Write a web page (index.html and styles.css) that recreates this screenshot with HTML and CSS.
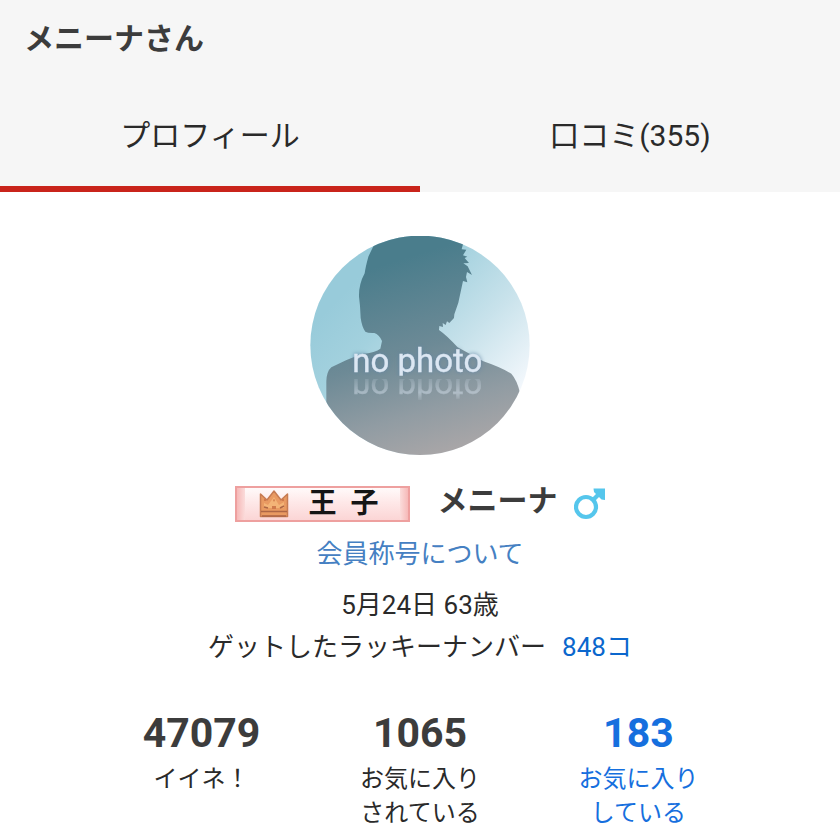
FILE: index.html
```html
<!DOCTYPE html>
<html lang="ja">
<head>
<meta charset="utf-8">
<meta name="viewport" content="width=device-width, initial-scale=1">
<title>メニーナさん</title>
<link rel="stylesheet" href="styles.css">
</head>
<body>
<header class="header">
  <h1 class="title">メニーナさん</h1>
  <nav class="tabs">
    <a class="tab tab-active" href="#profile" aria-current="page">プロフィール</a>
    <a class="tab" href="#reviews">口コミ(355)</a>
  </nav>
</header>
<main class="profile" id="profile">
  <svg class="avatar" viewBox="30 30 660 660" role="img" aria-label="no photo">
    <defs>
      <linearGradient id="sky" gradientUnits="userSpaceOnUse" x1="150" y1="180" x2="590" y2="600">
        <stop offset="0" stop-color="#98cbda"/>
        <stop offset=".25" stop-color="#a3d1de"/>
        <stop offset=".6" stop-color="#c8e2eb"/>
        <stop offset="1" stop-color="#f8fafe"/>
      </linearGradient>
      <linearGradient id="body" gradientUnits="userSpaceOnUse" x1="270" y1="110" x2="450" y2="690">
        <stop offset="0" stop-color="#4a7d8c"/>
        <stop offset=".45" stop-color="#6d8a96"/>
        <stop offset=".75" stop-color="#919ca3"/>
        <stop offset="1" stop-color="#aba7a8"/>
      </linearGradient>
      <linearGradient id="mirror" gradientUnits="userSpaceOnUse" x1="0" y1="458" x2="0" y2="522">
        <stop offset="0" stop-color="#fff" stop-opacity=".15"/>
        <stop offset=".65" stop-color="#fff" stop-opacity=".45"/>
        <stop offset="1" stop-color="#fff" stop-opacity=".1"/>
      </linearGradient>
      <mask id="mirror-mask" maskUnits="userSpaceOnUse" x="130" y="458" width="460" height="64">
        <rect x="130" y="458" width="460" height="64" fill="url(#mirror)"/>
      </mask>
      <clipPath id="disc"><circle cx="360" cy="358" r="329"/></clipPath>
      <clipPath id="above"><rect x="100" y="340" width="520" height="109"/></clipPath>
    </defs>
    <g clip-path="url(#disc)">
      <rect x="30" y="28" width="660" height="662" fill="url(#sky)"/>
      <path fill="url(#body)" d="M225 50L205 92Q196 125 194 142Q176 175 177 212L180 240L182 276Q186 304 196 317Q204 322 223 321Q237 325 246 345L241 368Q228 380 185 384Q135 402 94 424Q80 436 79 466V700H660V500Q651 462 634 443Q600 423 550 406L473 364Q440 328 417 312L418 300L429 303L428 291L437 297L441 286L448 291L462 276L463 265L475 230L489 165L502 169L498 153L501 138L516 147L503 121L490 112L507 111L494 96L502 92L489 88L499 71L485 70L489 55L485 20H230Z"/>
      <g clip-path="url(#above)"><text class="photo-text photo-glow" x="157" y="438">no photo</text></g>
      <g mask="url(#mirror-mask)"><g transform="translate(0 450) scale(1 -1)"><text class="photo-text" x="157" y="0" aria-hidden="true">no photo</text></g></g>
    </g>
  </svg>

  <div class="identity">
    <span class="badge">
      <svg class="crown" viewBox="0 0 30 28" aria-hidden="true">
        <path fill="#e99a62" stroke="#c77b52" stroke-width="1.5" stroke-linejoin="round" d="M1.500 4L8 10L15 1L22 10L28.500 4V26.500H1.500Z"/>
        <path fill="#f4b477" d="M5 13L9 15L15 7L20 15L25 12V18H5Z"/>
        <path fill="none" stroke="#ad6646" stroke-width="1.500" d="M2 21.500H28M3 26H27M5 17L9 18M21 18L25 16"/>
        <path fill="#d07a4c" d="M14 10L15 9L16 10L15 12ZM13 16H17V19H13ZM5 9H7V11H5ZM23 9H25V11H23Z"/>
      </svg>
      <span>王</span><span>子</span>
    </span>
    <h2 class="name">メニーナ</h2>
    <svg class="male" viewBox="0 0 32 32" role="img" aria-label="男性">
      <circle cx="12" cy="19" r="10" fill="none" stroke="#55c6ec" stroke-width="4.200"/>
      <path d="M18.500 12.500L27 4" stroke="#55c6ec" stroke-width="4.200"/>
      <path fill="#55c6ec" d="M19.500 .5H31V12L27.500 11.500L20 4Z"/>
    </svg>
  </div>

  <a class="about" href="#titles">会員称号について</a>
  <p class="line">5月24日 63歳</p>
  <p class="line">ゲットしたラッキーナンバー<a class="lucky" href="#lucky">848コ</a></p>

  <div class="stats">
    <div class="stat"><strong class="count">47079</strong><span>イイネ！</span></div>
    <div class="stat"><strong class="count">1065</strong><span>お気に入り<br>されている</span></div>
    <a class="stat stat-link" href="#following"><strong class="count">183</strong><span>お気に入り<br>している</span></a>
  </div>
</main>
</body>
</html>
```
FILE: styles.css
```css
* {
  box-sizing: border-box;
}

body {
  margin: 0;
  background: #fff;
  color: #2a2a2a;
  font-family: Roboto, "Noto Sans CJK JP", sans-serif;
  font-size: 26px;
}

a {
  color: #0b67cd;
  text-decoration: none;
}

h1,
h2,
p {
  margin: 0;
}

.header {
  background: #f6f6f6;
}

.title {
  padding: 16px 24px 24px;
  color: #3c3c3c;
  font-size: 30px;
  line-height: 46px;
}

.tabs {
  display: flex;
}

.tab {
  flex: 1;
  padding: 27px 0;
  border-bottom: 6px solid transparent;
  color: #2a2a2a;
  font-size: 30px;
  line-height: 46px;
  text-align: center;
}

.tab-active {
  border-color: #c9241b;
}

.profile {
  display: flex;
  flex-direction: column;
  align-items: center;
  padding-top: 44px;
}

.avatar {
  width: 220px;
  height: 220px;
}

.photo-text {
  fill: #dce7f3;
  stroke: #dce7f3;
  stroke-width: 1px;
  font-family: Roboto, sans-serif;
  font-size: 99px;
}

.photo-glow {
  filter: drop-shadow(0 0 7px #6486a4);
}

.identity {
  display: flex;
  align-items: flex-start;
  margin-top: 30px;
}

.badge {
  display: flex;
  align-items: center;
  gap: 14px;
  width: 175px;
  height: 36px;
  padding-left: 22px;
  border: 2px solid #eea09f;
  background:
    linear-gradient(90deg, #f6b9b8, #fbdcdb 8px, transparent 8px, transparent 163px, #fbdcdb 163px, #f6b9b8),
    linear-gradient(#fffafa, #fee8e8 45%, #fbd5d5);
  color: #151515;
  font-size: 28px;
  font-weight: 700;
  line-height: 32px;
}

.crown {
  width: 30px;
  height: 28px;
  margin-right: 6px;
}

.name {
  margin: 0 16px 0 28px;
  color: #3c3c3c;
  font-size: 30px;
  line-height: 30px;
}

.male {
  width: 32px;
  height: 32px;
  margin-top: 2px;
}

.about {
  margin: 10px 0 8px;
  color: #4580c2;
  line-height: 44px;
}

.line {
  line-height: 42px;
}

.line + .line {
  margin-bottom: 36px;
}

.lucky {
  margin-left: 16px;
}

.stats {
  display: grid;
  grid-template-columns: repeat(3, 1fr);
  width: 100%;
  padding: 0 11%;
}

.stat {
  display: flex;
  flex-direction: column;
  align-items: center;
  font-size: 24px;
  line-height: 34px;
  text-align: center;
}

.count {
  color: #3c3c3c;
  font-size: 41px;
  line-height: 58px;
}

.stat-link,
.stat-link .count {
  color: #166fde;
}
```
